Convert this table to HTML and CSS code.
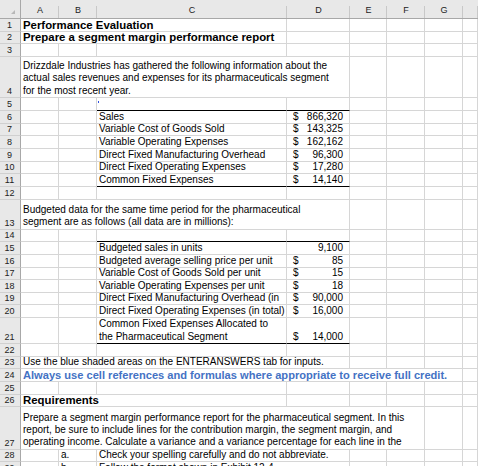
FILE: index.html
```html
<!DOCTYPE html>
<html>
<head>
<meta charset="utf-8">
<link rel="stylesheet" href="styles.css">
</head>
<body>
<div class="sheet">
  <div class="corner"><span class="tri"></span></div>
  <div class="ch">A</div><div class="ch">B</div><div class="ch">C</div><div class="ch">D</div><div class="ch">E</div><div class="ch">F</div><div class="ch">G</div><div class="ch"></div>

  <div class="rh">1</div><div class="c s3 b">Performance Evaluation</div><div class="c"></div><div class="c"></div><div class="c"></div><div class="c"></div><div class="c"></div>

  <div class="rh">2</div><div class="c s3 b">Prepare a segment margin performance report</div><div class="c"></div><div class="c"></div><div class="c"></div><div class="c"></div><div class="c"></div>

  <div class="rh">3</div><div class="c"></div><div class="c"></div><div class="c"></div><div class="c"></div><div class="c"></div><div class="c"></div><div class="c"></div><div class="c"></div>

  <div class="rh">4</div><div class="c s4 wrap">Drizzdale Industries has gathered the following information about the<br>actual sales revenues and expenses for its pharmaceuticals segment<br>for the most recent year.</div><div class="c"></div><div class="c"></div><div class="c"></div><div class="c"></div>

  <div class="rh">5</div><div class="c"></div><div class="c"></div><div class="c bk dotcell"><span class="dot"></span></div><div class="c bk"></div><div class="c"></div><div class="c"></div><div class="c"></div><div class="c"></div>

  <div class="rh">6</div><div class="c"></div><div class="c"></div><div class="c">Sales</div><div class="c acct"><span>$</span><span>866,320</span></div><div class="c"></div><div class="c"></div><div class="c"></div><div class="c"></div>

  <div class="rh">7</div><div class="c"></div><div class="c"></div><div class="c">Variable Cost of Goods Sold</div><div class="c acct"><span>$</span><span>143,325</span></div><div class="c"></div><div class="c"></div><div class="c"></div><div class="c"></div>

  <div class="rh">8</div><div class="c"></div><div class="c"></div><div class="c">Variable Operating Expenses</div><div class="c acct"><span>$</span><span>162,162</span></div><div class="c"></div><div class="c"></div><div class="c"></div><div class="c"></div>

  <div class="rh">9</div><div class="c"></div><div class="c"></div><div class="c">Direct Fixed Manufacturing Overhead</div><div class="c acct"><span>$</span><span>96,300</span></div><div class="c"></div><div class="c"></div><div class="c"></div><div class="c"></div>

  <div class="rh">10</div><div class="c"></div><div class="c"></div><div class="c">Direct Fixed Operating Expenses</div><div class="c acct"><span>$</span><span>17,280</span></div><div class="c"></div><div class="c"></div><div class="c"></div><div class="c"></div>

  <div class="rh">11</div><div class="c"></div><div class="c"></div><div class="c bk">Common Fixed Expenses</div><div class="c acct bk"><span>$</span><span>14,140</span></div><div class="c"></div><div class="c"></div><div class="c"></div><div class="c"></div>

  <div class="rh">12</div><div class="c"></div><div class="c"></div><div class="c"></div><div class="c"></div><div class="c"></div><div class="c"></div><div class="c"></div><div class="c"></div>

  <div class="rh">13</div><div class="c s4 wrap">Budgeted data for the same time period for the pharmaceutical<br>segment are as follows (all data are in millions):</div><div class="c"></div><div class="c"></div><div class="c"></div><div class="c"></div>

  <div class="rh">14</div><div class="c"></div><div class="c"></div><div class="c bk"></div><div class="c bk"></div><div class="c"></div><div class="c"></div><div class="c"></div><div class="c"></div>

  <div class="rh">15</div><div class="c"></div><div class="c"></div><div class="c">Budgeted sales in units</div><div class="c acct end"><span>9,100</span></div><div class="c"></div><div class="c"></div><div class="c"></div><div class="c"></div>

  <div class="rh">16</div><div class="c"></div><div class="c"></div><div class="c">Budgeted average selling price per unit</div><div class="c acct"><span>$</span><span>85</span></div><div class="c"></div><div class="c"></div><div class="c"></div><div class="c"></div>

  <div class="rh">17</div><div class="c"></div><div class="c"></div><div class="c">Variable Cost of Goods Sold per unit</div><div class="c acct"><span>$</span><span>15</span></div><div class="c"></div><div class="c"></div><div class="c"></div><div class="c"></div>

  <div class="rh">18</div><div class="c"></div><div class="c"></div><div class="c">Variable Operating Expenses per unit</div><div class="c acct"><span>$</span><span>18</span></div><div class="c"></div><div class="c"></div><div class="c"></div><div class="c"></div>

  <div class="rh">19</div><div class="c"></div><div class="c"></div><div class="c">Direct Fixed Manufacturing Overhead (in</div><div class="c acct"><span>$</span><span>90,000</span></div><div class="c"></div><div class="c"></div><div class="c"></div><div class="c"></div>

  <div class="rh">20</div><div class="c"></div><div class="c"></div><div class="c">Direct Fixed Operating Expenses (in total)</div><div class="c acct"><span>$</span><span>16,000</span></div><div class="c"></div><div class="c"></div><div class="c"></div><div class="c"></div>

  <div class="rh">21</div><div class="c"></div><div class="c"></div><div class="c bk wrap">Common Fixed Expenses Allocated to<br>the Pharmaceutical Segment</div><div class="c acct bk"><span>$</span><span>14,000</span></div><div class="c"></div><div class="c"></div><div class="c"></div><div class="c"></div>

  <div class="rh">22</div><div class="c"></div><div class="c"></div><div class="c"></div><div class="c"></div><div class="c"></div><div class="c"></div><div class="c"></div><div class="c"></div>

  <div class="rh">23</div><div class="c s4">Use the blue shaded areas on the ENTERANSWERS tab for inputs.</div><div class="c"></div><div class="c"></div><div class="c"></div><div class="c"></div>

  <div class="rh">24</div><div class="c s7 b blue">Always use cell references and formulas where appropriate to receive full credit.</div><div class="c"></div>

  <div class="rh">25</div><div class="c"></div><div class="c"></div><div class="c"></div><div class="c"></div><div class="c"></div><div class="c"></div><div class="c"></div><div class="c"></div>

  <div class="rh">26</div><div class="c s3 b">Requirements</div><div class="c"></div><div class="c"></div><div class="c"></div><div class="c"></div><div class="c"></div>

  <div class="rh">27</div><div class="c s6 wrap">Prepare a segment margin performance report for the pharmaceutical segment. In this<br>report, be sure to include lines for the contribution margin, the segment margin, and<br>operating income. Calculate a variance and a variance percentage for each line in the</div><div class="c"></div><div class="c"></div>

  <div class="rh">28</div><div class="c"></div><div class="c">a.</div><div class="c s2">Check your spelling carefully and do not abbreviate.</div><div class="c"></div><div class="c"></div><div class="c"></div><div class="c"></div>

  <div class="rh">29</div><div class="c"></div><div class="c">b.</div><div class="c s2">Follow the format shown in Exhibit 12-4.</div><div class="c"></div><div class="c"></div><div class="c"></div><div class="c"></div>
</div>
</body>
</html>
```
FILE: styles.css
```css
html, body {
  margin: 0;
  padding: 0;
  background: #fff;
  overflow: hidden;
}
.sheet {
  display: grid;
  grid-template-columns: 21px 38px 38px 190px 63px 37px 38px 38px 15px;
  grid-template-rows:
    19px
    12.667px 12.667px 12.667px
    41.333px
    12.667px 12.667px 12.667px 12.667px 12.667px 12.667px 12.667px 12.667px
    30px
    12.667px
    12.667px 12.667px 12.667px 12.667px 12.667px 12.667px
    26px
    12.667px 12.667px 12.667px 12.667px 12.667px
    42.333px
    12.667px 12.667px;
  font-family: "Liberation Sans", Arial, sans-serif;
  color: #000;
}
.corner {
  background: #e8e8e8;
  border-right: 1px solid #a8a8a8;
  border-bottom: 1px solid #a8a8a8;
  box-sizing: border-box;
  display: flex;
  align-items: flex-end;
  justify-content: flex-end;
  padding: 0 5px 4px 0;
}
.tri {
  width: 0;
  height: 0;
  border-left: 4px solid transparent;
  border-bottom: 4px solid #b8b8b8;
}
.ch {
  background: linear-gradient(#c8c8c8, #c8c8c8) right 6px / 1px 13px no-repeat, #e8e8e8;
  border-bottom: 1px solid #a8a8a8;
  box-sizing: border-box;
  font-size: 9px;
  line-height: 10px;
  color: #222;
  display: flex;
  align-items: flex-end;
  justify-content: center;
  padding-bottom: 3px;
}
.rh {
  background: #e8e8e8;
  border-right: 1px solid #a8a8a8;
  border-bottom: 1px solid #d0d0d0;
  box-sizing: border-box;
  font-size: 9px;
  line-height: 10px;
  color: #222;
  display: flex;
  align-items: flex-end;
  justify-content: center;
  padding-bottom: 1px;
  padding-right: 1px;
}
.c {
  border-right: 1px solid #d6d6d6;
  border-bottom: 1px solid #d6d6d6;
  box-sizing: border-box;
  display: flex;
  align-items: flex-end;
  white-space: nowrap;
  overflow: hidden;
  font-size: 10px;
  line-height: 12px;
  padding: 0 2px 0 2px;
  min-width: 0;
}
.wrap {
  line-height: 12.4px;
}
.s2 { grid-column: span 2; }
.s3 { grid-column: span 3; }
.s4 { grid-column: span 4; }
.s6 { grid-column: span 6; }
.s7 { grid-column: span 7; }
.b {
  font-weight: bold;
  font-size: 11.4px;
}
.blue {
  color: #4472c4;
  font-size: 11.1px;
}
.bk {
  border-bottom: 1px solid #000;
}
.acct {
  justify-content: space-between;
  padding: 0 6px 0 6px;
}
.acct.end {
  justify-content: flex-end;
}
.dotcell {
  position: relative;
}
.dot {
  position: absolute;
  left: 1px;
  top: 3px;
  width: 1px;
  height: 2px;
  background: #3050e0;
}
```
